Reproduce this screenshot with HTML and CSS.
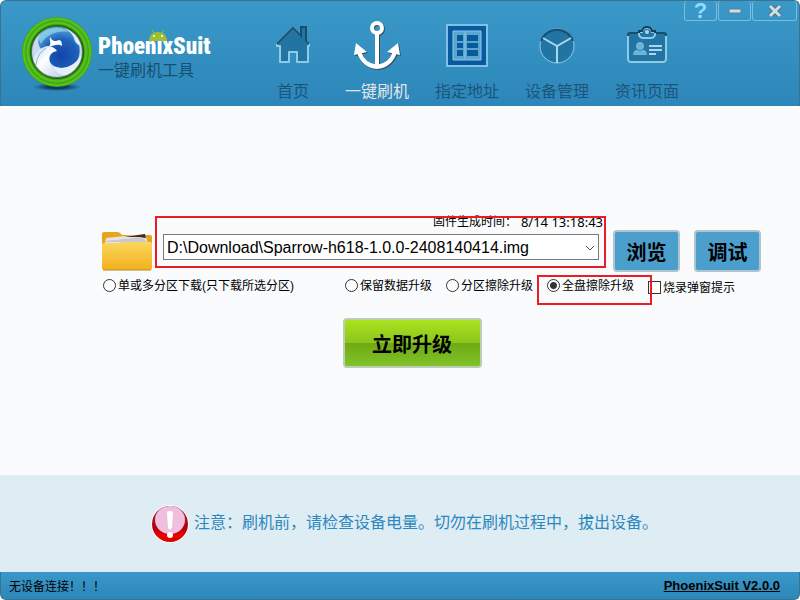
FILE: index.html
```html
<!DOCTYPE html>
<html lang="zh-CN">
<head>
    <meta charset="UTF-8">
    <meta name="viewport" content="width=device-width, initial-scale=1.0">
    <title>PhoenixSuit</title>
    <link rel="stylesheet" href="styles.css">
</head>
<body>
    <header class="header">
        <div class="brand">
            <svg class="brand-logo" viewBox="0 0 72 76" width="72" height="76">
                <defs>
                    <radialGradient id="ring" cx="50%" cy="50%" r="50%">
                        <stop offset="66%" stop-color="#1d6a08" />
                        <stop offset="76%" stop-color="#2f8a10" />
                        <stop offset="83%" stop-color="#5ccb1c" />
                        <stop offset="89%" stop-color="#3fa516" />
                        <stop offset="95%" stop-color="#5ccb1c" />
                        <stop offset="100%" stop-color="#3b9c14" />
                    </radialGradient>
                    <radialGradient id="ball" cx="55%" cy="70%" r="80%">
                        <stop offset="0%" stop-color="#1145a8" />
                        <stop offset="50%" stop-color="#1e60b8" />
                        <stop offset="100%" stop-color="#6cc0ea" />
                    </radialGradient>
                    <linearGradient id="wing" x1="0" y1="0" x2="1" y2="1">
                        <stop offset="0%" stop-color="#b9d2ee" />
                        <stop offset="40%" stop-color="#ffffff" />
                        <stop offset="100%" stop-color="#b4cbe8" />
                    </linearGradient>
                    <radialGradient id="shadow">
                        <stop offset="40%" stop-color="#0b3550" stop-opacity="0.9" />
                        <stop offset="100%" stop-color="#0b3550" stop-opacity="0" />
                    </radialGradient>
                </defs>
                <ellipse cx="36" cy="71" rx="24" ry="4" fill="url(#shadow)" />
                <circle cx="36" cy="36" r="35" fill="url(#ring)" />
                <circle cx="36" cy="36" r="26" fill="#c9daf0" />
                <path d="M18 20C26 8 44 9 53 18C60 27 61 40 54 48C46 53 34 54 29 46C26 40 29 36 35 35C32 30 26 30 21 34C18 31 16 26 18 20Z" fill="url(#ball)" />
                <path d="M12 44C14 36 20 31 27 30C31 30 34 32 36 35C30 36 27 40 29 47C31 54 37 59 44 60C36 64 25 62 18 55C14 51 12 48 12 44Z" fill="url(#wing)" />
                <path d="M15 49C16 41 19 36 25 32" fill="none" stroke="#8fb1dc" stroke-width="1" />
                <path d="M29 21C31 25 34 26 38 24C40 24 41 26 41 30C37 27 33 30 28 30C31 28 28 25 29 21Z" fill="#fff" />
                <path d="M42 11C51 14 58 20 60 30C57 29 54 27 53 22C51 17 47 14 42 11Z" fill="#dfeeff" />
                <path d="M61 38C60 51 50 60 41 59C36 57 33 54 31 50C43 55 54 50 61 38Z" fill="#e6eefa" />
                <path d="M17 22C23 11 39 9 49 16C37 14 26 18 20 28Z" fill="#a5e6f4" opacity="0.6" />
                <circle cx="36" cy="36" r="26" fill="none" stroke="#16510a" stroke-width="2" opacity="0.7" />
            </svg>
            <div class="brand-text">
                <svg class="android" viewBox="0 0 20 12" width="20" height="12">
                    <path d="M4 1L6 4M16 1L14 4" stroke="#9fbd30" stroke-width="1" />
                    <path d="M1 12C1 0 19 0 19 12Z" fill="#9fbd30" />
                    <circle cx="6" cy="7" r="1" fill="#fff" />
                    <circle cx="14" cy="7" r="1" fill="#fff" />
                </svg>
                <span class="brand-name">PhoenixSuit</span>
                <span class="brand-sub">一键刷机工具</span>
            </div>
        </div>

        <nav>
            <ul class="nav-list">
                <li><a href="#">
                    <svg viewBox="0 0 48 48" width="48" height="48">
                        <path d="M8 23L24 7L32 15V6H37V20L40 23V25H39V41H28V31H20V41H11V25H8Z" fill="#2274a2" stroke="#8dcbe9" stroke-width="2" stroke-linejoin="round" />
                        <path d="M8 23L24 7L32 15V6H37V20L40 23" fill="none" stroke="#174f70" stroke-width="2" />
                    </svg>
                    首页
                </a></li>
                <li><a href="#" class="active">
                    <svg viewBox="0 -2 48 48" width="48" height="48">
                        <g transform="translate(1 1)" fill="none" stroke="#344f5e" stroke-width="4">
                            <circle cx="24" cy="5" r="5" />
                            <path d="M24 11V43M6 29C9 38 16 43 24 44C32 43 39 38 42 29" />
                        </g>
                        <path d="M1 32L3 20L14 29ZM47 32L45 20L34 29Z" fill="#344f5e" transform="translate(1 1)" />
                        <g fill="none" stroke="#fff" stroke-width="4">
                            <circle cx="24" cy="5" r="5" />
                            <path d="M24 11V43M6 29C9 38 16 43 24 44C32 43 39 38 42 29" />
                        </g>
                        <path d="M1 32L3 20L14 29ZM47 32L45 20L34 29Z" fill="#fff" />
                    </svg>
                    一键刷机
                </a></li>
                <li><a href="#">
                    <svg viewBox="0 0 48 48" width="48" height="48">
                        <path d="M4 4H44V45H4Z" fill="#075a9e" stroke="#7fc0e4" stroke-width="2" />
                        <path d="M10 10H38V39H10Z" fill="#5ba5cf" stroke="#8dc8e8" stroke-width="1" />
                        <path d="M14 14H20V20H14ZM24 14H35V20H24ZM14 22H20V27H14ZM24 22H35V27H24ZM14 29H20V35H14ZM24 29H35V35H24Z" fill="#075a9e" />
                        <path d="M22 11V38" stroke="#8dc8e8" stroke-width="1" />
                    </svg>
                    指定地址
                </a></li>
                <li><a href="#">
                    <svg viewBox="0 0 48 48" width="48" height="48">
                        <circle cx="24" cy="25" r="17" fill="#2274a2" stroke="#8dcbe9" stroke-width="1" />
                        <path d="M8 20A17 17 0 0 1 40 20" fill="none" stroke="#174f70" stroke-width="2" />
                        <path d="M10 17L24 25L38 17M24 25V42" fill="none" stroke="#a5d7ef" stroke-width="2" />
                    </svg>
                    设备管理
                </a></li>
                <li><a href="#">
                    <svg viewBox="0 0 48 48" width="48" height="48">
                        <path d="M7 12H41Q43 12 43 14V38Q43 41 40 41H8Q5 41 5 38V14Q5 12 7 12Z" fill="#2274a2" stroke="#174f70" stroke-width="2" />
                        <path d="M5 15V38Q5 41 8 41H40Q43 41 43 38V15" fill="none" stroke="#8dcbe9" stroke-width="2" />
                        <path d="M16 11H19Q20 7 24 7Q28 7 29 11H32V14Q31 17 28 17H20Q17 17 16 14Z" fill="#2274a2" stroke="#8dcbe9" stroke-width="2" />
                        <path d="M16 12V10H19Q20 6 24 6Q28 6 29 10H32V12" fill="none" stroke="#143f58" stroke-width="2" />
                        <circle cx="24" cy="11" r="2" fill="#a5d7ef" />
                        <circle cx="17" cy="25" r="4" fill="#6bb4da" />
                        <path d="M10 34C10 29 14 28 17 30C20 28 24 29 24 34Z" fill="#6bb4da" />
                        <path d="M26 25H39M26 29H39M26 33H33" stroke="#a5d7ef" stroke-width="2" />
                    </svg>
                    资讯页面
                </a></li>
            </ul>
        </nav>

        <div class="window-buttons">
            <button type="button" class="help" aria-label="帮助">?</button>
            <button type="button" aria-label="最小化">
                <svg viewBox="0 0 14 6" width="14" height="6"><path d="M1 1H13V5H1Z" fill="#cfdde6" stroke="#5d7f93" /></svg>
            </button>
            <button type="button" class="close" aria-label="关闭">
                <svg viewBox="0 0 14 14" width="14" height="14">
                    <path d="M2 2L12 12M12 2L2 12" stroke="#4f748a" stroke-width="5" />
                    <path d="M2 2L12 12M12 2L2 12" stroke="#cfdde6" stroke-width="3" />
                </svg>
            </button>
        </div>
    </header>

    <main class="main">
        <p class="build-time">固件生成时间： <span>8/14 13:18:43</span></p>

        <div class="file-row">
            <svg class="folder" viewBox="0 0 52 42" width="52" height="42">
                <defs>
                    <linearGradient id="folder" x1="0" y1="0" x2="0" y2="1">
                        <stop offset="0%" stop-color="#fbd75a" />
                        <stop offset="100%" stop-color="#f2b11f" />
                    </linearGradient>
                </defs>
                <path d="M1 13V4Q1 2 3 2H16Q18 2 19 3L21 5H49Q51 5 51 7V20H1Z" fill="#e5a51c" />
                <path d="M5 8L44 4L47 13H4Z" fill="#e7e4e4" />
                <path d="M23 7L44 4L45 8L36 7Z" fill="#48291c" />
                <path d="M5 11L40 7L47 12H4Z" fill="#c9c9d0" />
                <path d="M1 15Q1 13 3 13H18L21 12H49Q51 12 51 14V38Q51 40 49 40H3Q1 40 1 38Z" fill="url(#folder)" />
                <path d="M2 40H50" stroke="#b98a22" stroke-width="1" />
            </svg>
            <div class="file-select marked">
                <select aria-label="固件文件">
                    <option>D:\Download\Sparrow-h618-1.0.0-2408140414.img</option>
                </select>
                <svg class="arrow" viewBox="0 0 10 6" width="10" height="6"><path d="M1 1L5 5L9 1" fill="none" stroke="#555" /></svg>
            </div>
            <button type="button" class="blue-button">浏览</button>
            <button type="button" class="blue-button">调试</button>
        </div>

        <div class="options">
            <label class="first"><input type="radio" name="mode">单或多分区下载(只下载所选分区)</label>
            <label><input type="radio" name="mode">保留数据升级</label>
            <label><input type="radio" name="mode">分区擦除升级</label>
            <label class="marked"><input type="radio" name="mode" checked>全盘擦除升级</label>
            <label class="popup-option"><input type="checkbox">烧录弹窗提示</label>
        </div>

        <div class="upgrade">
            <button type="button" class="green-button">立即升级</button>
        </div>
    </main>

    <section class="notice">
        <svg viewBox="0 0 38 40" width="38" height="40">
            <defs>
                <linearGradient id="alert" x1="0" y1="0" x2="0" y2="1">
                    <stop offset="0%" stop-color="#a02a3c" />
                    <stop offset="60%" stop-color="#b00010" />
                    <stop offset="85%" stop-color="#f00000" />
                    <stop offset="100%" stop-color="#d00000" />
                </linearGradient>
            </defs>
            <circle cx="19" cy="20" r="19" fill="#fff" />
            <circle cx="19" cy="20" r="18" fill="url(#alert)" />
            <ellipse cx="19" cy="16" rx="15" ry="14" fill="#efbfdd" />
            <path d="M16 9Q16 7 19 7Q22 7 22 9L21 24Q19 27 17 24Z" fill="#fff" />
            <circle cx="19" cy="31" r="3" fill="#fff" />
        </svg>
        <p>注意：刷机前，请检查设备电量。切勿在刷机过程中，拔出设备。</p>
    </section>

    <footer class="footer">
        <span>无设备连接！！！</span>
        <a href="#">PhoenixSuit V2.0.0</a>
    </footer>
</body>
</html>
```
FILE: styles.css
```css
* {
    box-sizing: border-box;
}

html {
    background-color: #fff;
}

body {
    margin: 0;
    min-height: 100vh;
    display: flex;
    flex-direction: column;
    font-family: "Liberation Sans", "Noto Sans CJK SC", sans-serif;
    font-size: 12px;
    color: #000;
}

button {
    font-family: inherit;
    cursor: pointer;
}

/* Header */
.header {
    height: 106px;
    display: flex;
    padding: 0 2px 0 20px;
    background: linear-gradient(#3a99c9, #2d86b9);
    border: 1px solid #3b7290;
    border-bottom: none;
    border-radius: 6px 6px 0 0;
}

.brand {
    display: flex;
    flex: none;
    gap: 5px;
    width: 204px;
    padding-top: 15px;
}

.brand-text {
    position: relative;
    display: flex;
    flex-direction: column;
    padding-top: 16px;
}

.brand-name {
    font-family: "Roboto Condensed", "Open Sans Condensed", "Noto Sans ExtraCondensed", "Liberation Sans Narrow", Roboto, sans-serif;
    font-size: 23px;
    line-height: 30px;
    font-weight: 900;
    color: #fff;
}

.brand-sub {
    font-size: 16px;
    line-height: 18px;
    color: #174f73;
}

/* sits on top of the letters of the brand name */
.android {
    position: absolute;
    top: 13px;
    left: 50px;
}

.nav-list {
    list-style: none;
    display: flex;
    gap: 26px;
    margin: 0 0 0 42px;
    padding: 20px 0 0;
}

.nav-list a {
    display: flex;
    flex-direction: column;
    align-items: center;
    gap: 10px;
    min-width: 52px;
    font-size: 16px;
    line-height: 26px;
    color: #1c557a;
    text-decoration: none;
    white-space: nowrap;
}

.nav-list svg {
    overflow: visible;
}

.nav-list a.active {
    color: #e3e6e8;
}

.window-buttons {
    display: flex;
    gap: 1px;
    height: 20px;
    margin-left: auto;
}

.window-buttons button {
    display: flex;
    justify-content: center;
    align-items: center;
    width: 33px;
    padding: 0;
    background: none;
    border: 1px solid #79bcdc;
    border-top: none;
    border-radius: 3px;
}

.window-buttons .close {
    width: 45px;
}

.window-buttons .help {
    font-size: 22px;
    line-height: 18px;
    font-weight: bold;
    color: #8fdcfb;
}

/* Main */
.main {
    flex: 1;
    padding: 108px 39px 24px 101px;
    background-color: #f9fbfd;
}

.build-time {
    display: flex;
    justify-content: flex-end;
    align-items: flex-end;
    gap: 4px;
    margin: 0 158px 0 0;
    line-height: 16px;
}

.build-time span {
    font-family: "Noto Sans", sans-serif;
    font-size: 13px;
}

.file-row {
    display: flex;
    align-items: center;
    gap: 14px;
}

.folder {
    margin-right: -4px;
}

.file-select {
    flex: 1;
    margin-top: -8px;
}

.file-select select {
    display: block;
    width: 100%;
    height: 26px;
    padding: 0 24px 0 3px;
    appearance: none;
    background-color: #fff;
    border: 1px solid #7a7a7a;
    border-radius: 0;
    font-family: inherit;
    font-size: 16px;
    color: #000;
}

.arrow {
    position: absolute;
    right: 4px;
    top: 11px;
    pointer-events: none;
}

/* red frames laid over the marked controls */
.marked {
    position: relative;
}

.marked::after {
    content: "";
    position: absolute;
    inset: -18px -7px -8px -8px;
    border: 2px solid #ec1c24;
    pointer-events: none;
}

.options .marked::after {
    inset: -1px -18px -9px -10px;
}

.blue-button {
    width: 67px;
    height: 42px;
    padding: 0;
    background-color: #4b9fcc;
    border: 2px solid #b0c4ce;
    border-radius: 4px;
    font-size: 20px;
    font-weight: bold;
}

.options {
    display: flex;
    align-items: flex-start;
    gap: 14px;
    padding: 4px 26px 0 2px;
}

.options label {
    display: flex;
    align-items: center;
    gap: 2px;
    line-height: 20px;
    white-space: nowrap;
}

.options .first {
    margin-right: auto;
}

.options .popup-option {
    padding-top: 2px;
}

.options input {
    appearance: none;
    width: 13px;
    height: 13px;
    margin: 0 0 2px;
    background-color: #fff;
    border: 1px solid #333;
}

.options input[type="radio"] {
    border-radius: 50%;
}

.options input[type="radio"]:checked {
    background: radial-gradient(circle, #333 3px, #fff 4px);
}

.upgrade {
    display: flex;
    justify-content: center;
    margin: 20px 38px 0 0;
}

.green-button {
    width: 139px;
    height: 50px;
    padding: 0;
    background: linear-gradient(#a9e31f, #8cc51c 50%, #6fa914 50%, #80c22a);
    border: 2px solid #bccdb4;
    border-radius: 4px;
    font-size: 20px;
    font-weight: bold;
}

/* Notice */
.notice {
    display: flex;
    align-items: center;
    gap: 5px;
    height: 97px;
    padding-left: 151px;
    background-color: #deecf4;
    font-size: 16px;
    color: #2d88bd;
}

.notice p {
    margin: 0 0 6px;
}

/* Footer */
.footer {
    height: 28px;
    display: flex;
    justify-content: space-between;
    align-items: center;
    padding: 0 19px 0 8px;
    background: linear-gradient(#3a99c9, #2d86b9);
    border: 1px solid #3b7290;
    border-top: none;
    border-radius: 0 0 6px 6px;
}

.footer a {
    font-size: 13px;
    font-weight: bold;
    color: #000;
}
```
